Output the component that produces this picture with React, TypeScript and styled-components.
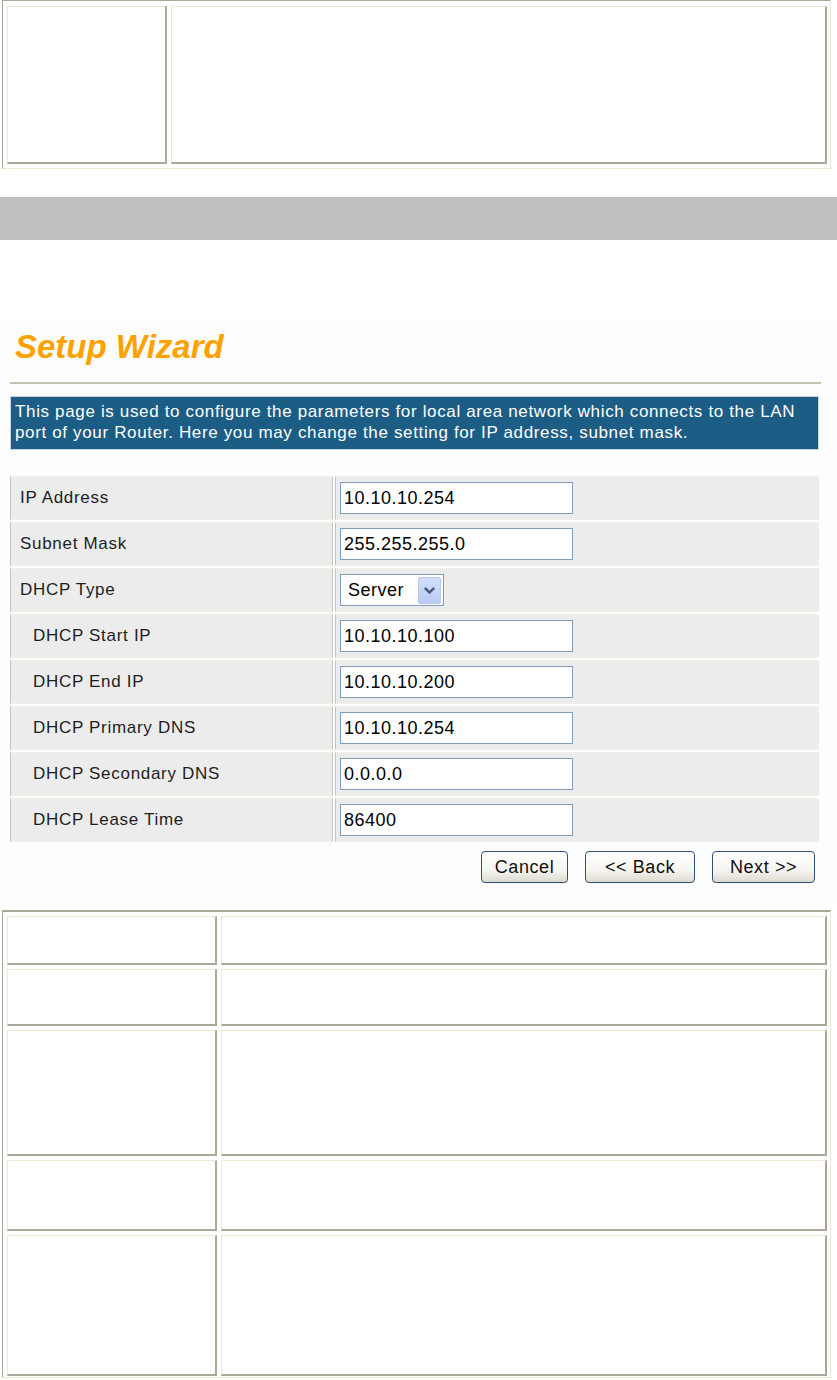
import React from "react";
import styled, { createGlobalStyle } from "styled-components";

const GlobalStyle = createGlobalStyle`
  html, body { margin: 0; padding: 0; background: #ffffff; }
  body { font-family: "Liberation Sans", Arial, sans-serif; }
  * { box-sizing: border-box; }
`;

const DARK = "#aca899";
const LIGHT = "#ebe8d6";

const Page = styled.div`
  width: 837px;
  display: flex;
  flex-direction: column;
`;

const DocTable = styled.div<{ $cols: string; $mt: number; $top: number }>`
  margin: ${(p) => p.$mt}px 6px 0 2px;
  display: grid;
  grid-template-columns: ${(p) => p.$cols};
  column-gap: 4px;
  row-gap: 4px;
  padding: ${(p) => (p.$top === 2 ? 4 : 5)}px 3px ${(p) => (p.$top === 2 ? 1 : 4)}px 4px;
  border-top: ${(p) => p.$top}px solid ${DARK};
  border-left: 1px solid ${DARK};
  border-right: 1px solid ${LIGHT};
  border-bottom: 1px solid ${LIGHT};
`;

const DocCell = styled.div<{ $h: number }>`
  height: ${(p) => p.$h}px;
  background: #ffffff;
  border-top: 1px solid ${LIGHT};
  border-left: 1px solid ${LIGHT};
  border-right: 2px solid ${DARK};
  border-bottom: 2px solid ${DARK};
`;

const GrayBand = styled.div`
  margin-top: 28px;
  height: 43px;
  background: #c0c0c0;
`;

const Shot = styled.section`
  margin-top: 82px;
  background: #fdfdfd;
  padding: 5px 18px 15px 10px;
  display: flex;
  flex-direction: column;
`;

const Title = styled.h1`
  margin: 0 0 0 5px;
  font-family: "Liberation Sans", Arial, sans-serif;
  font-size: 33px;
  line-height: 40px;
  font-weight: bold;
  font-style: italic;
  color: #ffa200;
`;

const Rule = styled.div`
  margin-top: 15px;
  margin-right: -2px;
  height: 2px;
  background: #c6c2b0;
`;

const Intro = styled.div`
  margin-top: 12px;
  height: 54px;
  background: #1c5d85;
  border: 1px solid #c9d3da;
  padding: 4px 0 0 4px;
  color: #ffffff;
  font-size: 17px;
  line-height: 21px;
  letter-spacing: 0.65px;
`;

const IntroLine = styled.div`
  white-space: nowrap;
`;

const FormGrid = styled.div`
  margin-top: 26px;
  display: grid;
  grid-template-columns: 323px 1fr;
  gap: 2px;
`;

const LabelCell = styled.div<{ $indent: boolean }>`
  height: 44px;
  background: #ececec;
  border-top: 1px solid #f3f1e6;
  border-left: 1px solid #c9c5b5;
  border-right: 1px solid #c9c5b5;
  border-bottom: 1px solid #f3f1e6;
  padding-left: ${(p) => (p.$indent ? 22 : 9)}px;
  display: flex;
  align-items: center;
  font-size: 17px;
  letter-spacing: 0.7px;
  color: #1e1e1e;
`;

const ValueCell = styled.div`
  height: 44px;
  background: #ececec;
  border-top: 1px solid #f3f1e6;
  border-left: 1px solid #c9c5b5;
  border-bottom: 1px solid #f3f1e6;
  padding-left: 4px;
  display: flex;
  align-items: center;
`;

const TextInput = styled.input`
  width: 233px;
  height: 32px;
  margin: 0;
  border: 1px solid #7f9db9;
  background: #ffffff;
  padding: 0 0 0 3px;
  font-family: "Liberation Sans", Arial, sans-serif;
  font-size: 18px;
  letter-spacing: 0.5px;
  color: #000000;
  outline: none;
`;

const SelectBox = styled.div`
  width: 104px;
  height: 32px;
  border: 1px solid #7f9db9;
  background: #ffffff;
  display: flex;
  align-items: center;
  justify-content: space-between;
  padding: 0 2px 0 7px;
  font-size: 18px;
  letter-spacing: 0.5px;
  color: #000000;
`;

const SelectArrow = styled.span`
  width: 23px;
  height: 27px;
  background: linear-gradient(#d3dffb, #b8cbf6);
  border: 1px solid #b4c8f2;
  border-radius: 2px;
  display: flex;
  align-items: center;
  justify-content: center;
`;

const ButtonRow = styled.div`
  margin-top: 9px;
  padding-right: 4px;
  display: flex;
  justify-content: flex-end;
  gap: 17px;
`;

const Button = styled.button<{ $w: number }>`
  width: ${(p) => p.$w}px;
  height: 32px;
  margin: 0;
  padding: 0;
  border: 1px solid #2d4f78;
  border-radius: 4px;
  background: linear-gradient(#ffffff 0%, #f6f5f0 60%, #dcdad0 100%);
  font-family: "Liberation Sans", Arial, sans-serif;
  font-size: 18px;
  letter-spacing: 0.6px;
  color: #111111;
`;

const rows: { label: string; value: string; indent: boolean; select?: boolean }[] = [
  { label: "IP Address", value: "10.10.10.254", indent: false },
  { label: "Subnet Mask", value: "255.255.255.0", indent: false },
  { label: "DHCP Type", value: "Server", indent: false, select: true },
  { label: "DHCP Start IP", value: "10.10.10.100", indent: true },
  { label: "DHCP End IP", value: "10.10.10.200", indent: true },
  { label: "DHCP Primary DNS", value: "10.10.10.254", indent: true },
  { label: "DHCP Secondary DNS", value: "0.0.0.0", indent: true },
  { label: "DHCP Lease Time", value: "86400", indent: true },
];

const bottomHeights = [49, 57, 126, 71, 141];

export default function App() {
  return (
    <Page>
      <GlobalStyle />
      <DocTable $cols="160px 1fr" $mt={0} $top={1}>
        <DocCell $h={158} />
        <DocCell $h={158} />
      </DocTable>

      <GrayBand />

      <Shot>
        <Title>Setup Wizard</Title>
        <Rule />
        <Intro>
          <IntroLine>
            This page is used to configure the parameters for local area network which connects to the LAN
          </IntroLine>
          <IntroLine>port of your Router. Here you may change the setting for IP address, subnet mask.</IntroLine>
        </Intro>
        <FormGrid>
          {rows.map((r) => (
            <React.Fragment key={r.label}>
              <LabelCell $indent={r.indent}>{r.label}</LabelCell>
              <ValueCell>
                {r.select ? (
                  <SelectBox>
                    <span>{r.value}</span>
                    <SelectArrow>
                      <svg width="13" height="9" viewBox="0 0 13 9">
                        <path d="M1.8 1.8 L6.5 6.5 L11.2 1.8" fill="none" stroke="#4a5e86" strokeWidth="2.6" />
                      </svg>
                    </SelectArrow>
                  </SelectBox>
                ) : (
                  <TextInput readOnly value={r.value} />
                )}
              </ValueCell>
            </React.Fragment>
          ))}
        </FormGrid>
        <ButtonRow>
          <Button $w={87}>Cancel</Button>
          <Button $w={110}>&lt;&lt; Back</Button>
          <Button $w={103}>Next &gt;&gt;</Button>
        </ButtonRow>
      </Shot>

      <DocTable $cols="210px 1fr" $mt={12} $top={2}>
        {bottomHeights.map((h, i) => (
          <React.Fragment key={i}>
            <DocCell $h={h} />
            <DocCell $h={h} />
          </React.Fragment>
        ))}
      </DocTable>
    </Page>
  );
}
